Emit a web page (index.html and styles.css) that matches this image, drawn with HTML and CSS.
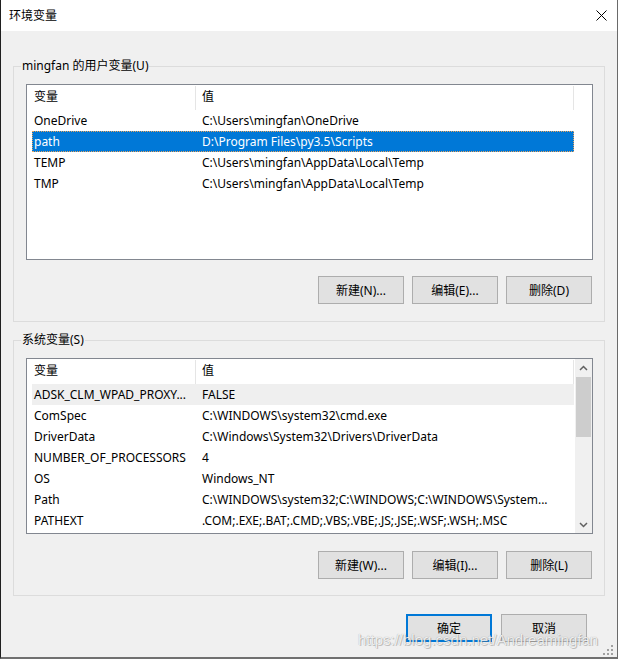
FILE: index.html
```html
<!DOCTYPE html>
<html lang="zh-CN">
<head>
<meta charset="utf-8">
<title>环境变量</title>
<link rel="stylesheet" href="styles.css">
</head>
<body>
<div class="window">
  <div class="titlebar">
    <span class="title">环境变量</span>
    <svg class="close" width="11" height="11" viewBox="0 0 11 11"><path d="M0.5 0.5L10.5 10.5M10.5 0.5L0.5 10.5" stroke="#000" stroke-width="1"/></svg>
  </div>
  <div class="content">
    <fieldset class="group group-user">
      <legend>mingfan 的用户变量(U)</legend>
      <div class="list">
        <div class="list-main">
          <div class="list-head"><div class="hcell c1">变量</div><div class="hcell c2">值</div></div>
          <div class="row"><span class="cell c1">OneDrive</span><span class="cell c2">C:\Users\mingfan\OneDrive</span></div>
          <div class="row selected"><span class="cell c1">path</span><span class="cell c2">D:\Program Files\py3.5\Scripts</span></div>
          <div class="row"><span class="cell c1">TEMP</span><span class="cell c2">C:\Users\mingfan\AppData\Local\Temp</span></div>
          <div class="row"><span class="cell c1">TMP</span><span class="cell c2">C:\Users\mingfan\AppData\Local\Temp</span></div>
        </div>
      </div>
      <div class="buttons">
        <button class="btn">新建(N)...</button>
        <button class="btn">编辑(E)...</button>
        <button class="btn">删除(D)</button>
      </div>
    </fieldset>
    <fieldset class="group group-sys">
      <legend>系统变量(S)</legend>
      <div class="list">
        <div class="list-main">
          <div class="list-head"><div class="hcell c1">变量</div><div class="hcell c2">值</div></div>
          <div class="row hover"><span class="cell c1">ADSK_CLM_WPAD_PROXY...</span><span class="cell c2">FALSE</span></div>
          <div class="row"><span class="cell c1">ComSpec</span><span class="cell c2">C:\WINDOWS\system32\cmd.exe</span></div>
          <div class="row"><span class="cell c1">DriverData</span><span class="cell c2">C:\Windows\System32\Drivers\DriverData</span></div>
          <div class="row"><span class="cell c1">NUMBER_OF_PROCESSORS</span><span class="cell c2">4</span></div>
          <div class="row"><span class="cell c1">OS</span><span class="cell c2">Windows_NT</span></div>
          <div class="row"><span class="cell c1">Path</span><span class="cell c2">C:\WINDOWS\system32;C:\WINDOWS;C:\WINDOWS\System...</span></div>
          <div class="row"><span class="cell c1">PATHEXT</span><span class="cell c2">.COM;.EXE;.BAT;.CMD;.VBS;.VBE;.JS;.JSE;.WSF;.WSH;.MSC</span></div>
        </div>
        <div class="scrollbar">
          <div class="sb-arrow"><svg width="9" height="6" viewBox="0 0 9 6"><path d="M1 5L4.5 1.5L8 5" fill="none" stroke="#606060" stroke-width="1.5"/></svg></div>
          <div class="sb-track"><div class="sb-thumb"></div></div>
          <div class="sb-arrow"><svg width="9" height="6" viewBox="0 0 9 6"><path d="M1 1L4.5 4.5L8 1" fill="none" stroke="#606060" stroke-width="1.5"/></svg></div>
        </div>
      </div>
      <div class="buttons">
        <button class="btn">新建(W)...</button>
        <button class="btn">编辑(I)...</button>
        <button class="btn">删除(L)</button>
      </div>
    </fieldset>
    <div class="footer">
      <button class="btn btn-default">确定</button>
      <button class="btn">取消</button>
    </div>
  </div>
  <div class="watermark">https://blog.csdn.net/Andreamingfan</div>
  <svg class="grip" width="11" height="11" viewBox="0 0 11 11">
    <rect x="8" y="0" width="2" height="2" fill="#a0a0a0"/>
    <rect x="4" y="4" width="2" height="2" fill="#a0a0a0"/>
    <rect x="8" y="4" width="2" height="2" fill="#a0a0a0"/>
    <rect x="0" y="8" width="2" height="2" fill="#a0a0a0"/>
    <rect x="4" y="8" width="2" height="2" fill="#a0a0a0"/>
    <rect x="8" y="8" width="2" height="2" fill="#a0a0a0"/>
  </svg>
</div>
</body>
</html>
```
FILE: styles.css
```css
html, body {
  margin: 0;
  padding: 0;
  width: 618px;
  height: 659px;
  overflow: hidden;
  background: #f0f0f0;
}

body {
  font-family: "Noto Sans", "Noto Sans CJK SC", sans-serif;
  font-size: 12px;
  color: #000;
}

.window {
  position: relative;
  width: 618px;
  height: 659px;
  box-sizing: border-box;
  border-left: 1px solid #1f1f1f;
  border-right: 1px solid #6a6a6a;
  border-bottom: 2px solid #707070;
  background: #f0f0f0;
}

.titlebar {
  height: 31px;
  background: #fff;
  display: flex;
  align-items: center;
  justify-content: space-between;
  padding: 0 10px 0 8px;
}

.title {
  line-height: 16px;
}

.close {
  display: block;
}

.content {
  padding: 0 12px;
}

.group {
  margin: 27px 0 0;
  padding: 10px 11px 17px 12px;
  border: 1px solid #dcdcdc;
  min-width: 0;
}

.group-sys {
  margin-top: 10px;
  padding-bottom: 16px;
}

.group legend {
  margin-left: -5px;
  padding: 0 1px;
  line-height: 16px;
  height: 16px;
}

.list {
  height: 176px;
  box-sizing: border-box;
  border: 1px solid #828790;
  background: #fff;
  display: flex;
  overflow: hidden;
}

.list-main {
  flex: 1;
  min-width: 0;
}

.list-head {
  display: flex;
  height: 25px;
}

.hcell {
  box-sizing: border-box;
  height: 24px;
  margin-top: 1px;
  line-height: 22px;
  border-right: 1px solid #e5e5e5;
  white-space: nowrap;
}

.hcell.c1 {
  width: 169px;
  padding-left: 7px;
}

.hcell.c2 {
  width: 378px;
  padding-left: 6px;
}

.row {
  display: flex;
  height: 21px;
  line-height: 21px;
  margin-left: 5px;
  width: 542px;
  box-sizing: border-box;
  white-space: nowrap;
}

.cell {
  overflow: hidden;
  white-space: nowrap;
}

.cell.c1 {
  width: 164px;
  flex: none;
  padding-left: 2px;
  box-sizing: border-box;
}

.cell.c2 {
  flex: 1;
  padding-left: 6px;
}

.row.selected {
  background: #0078d7;
  color: #fff;
  outline: 1px dotted #e9a45c;
  outline-offset: -1px;
}

.row.hover {
  background: #efefef;
}

.scrollbar {
  width: 17px;
  flex: none;
  background: #f0f0f0;
  display: flex;
  flex-direction: column;
}

.sb-arrow {
  height: 17px;
  display: flex;
  align-items: center;
  justify-content: center;
}

.sb-arrow svg {
  display: block;
}

.sb-track {
  flex: 1;
  padding: 1px 1px 0;
}

.sb-thumb {
  height: 60px;
  background: #cdcdcd;
}

.buttons {
  display: flex;
  justify-content: flex-end;
  gap: 8px;
  margin-top: 16px;
  margin-right: 1px;
}

.group-sys .buttons {
  margin-top: 17px;
}

.btn {
  width: 86px;
  height: 28px;
  box-sizing: border-box;
  border: 1px solid #adadad;
  background: #e1e1e1;
  font-family: "Noto Sans", "Noto Sans CJK SC", sans-serif;
  font-size: 12px;
  color: #000;
  padding: 0;
  margin: 0;
  border-radius: 0;
}

.btn-default {
  border: 2px solid #0078d7;
}

.footer {
  display: flex;
  justify-content: flex-end;
  gap: 9px;
  margin-top: 18px;
  padding-right: 18px;
}

.watermark {
  position: absolute;
  left: 357px;
  top: 631px;
  font-family: "Liberation Sans", Arial, sans-serif;
  font-size: 15px;
  line-height: 18px;
  color: rgba(255, 255, 255, 0.85);
  text-shadow: 0 0 1px rgba(0, 0, 0, 0.35), 1px 1px 0 rgba(120, 120, 120, 0.35);
  white-space: nowrap;
}

.grip {
  position: absolute;
  right: 3px;
  bottom: 1px;
}
```
